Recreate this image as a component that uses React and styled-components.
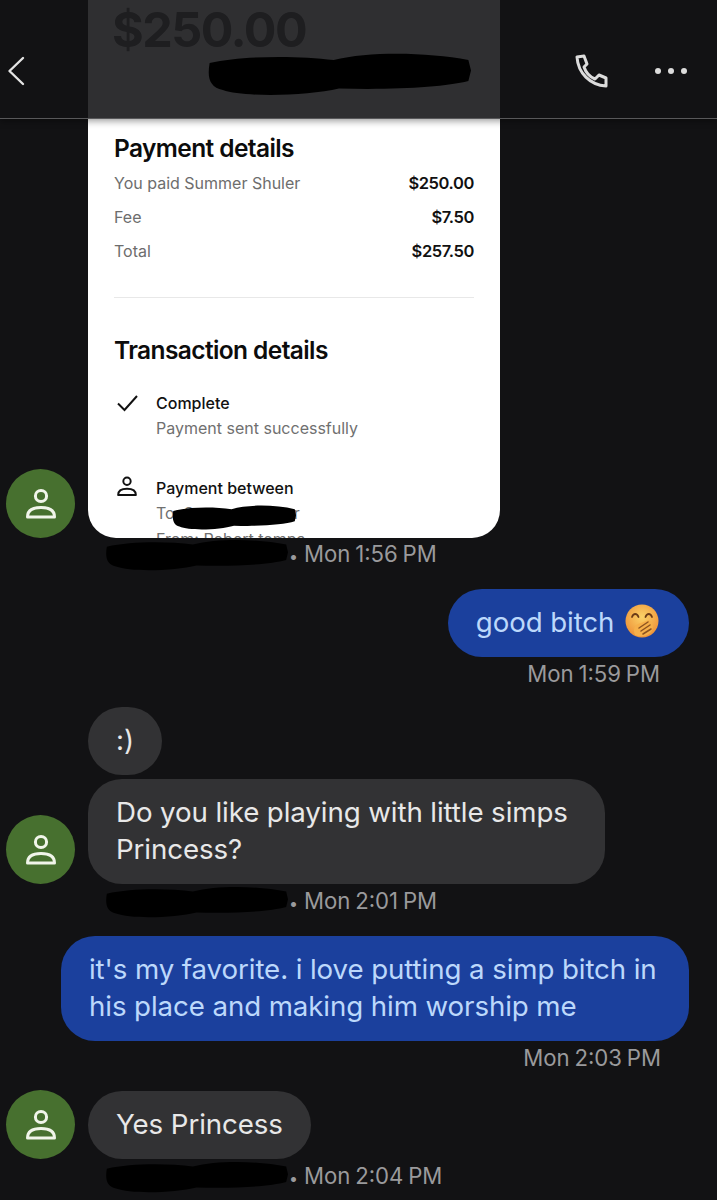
import styled, { createGlobalStyle } from 'styled-components'

const GlobalStyle = createGlobalStyle`
  html, body { margin: 0; padding: 0; background: #121214; }
  body { font-family: "Inter", "Liberation Sans", sans-serif; }
`

const Scrawl = ({ className }) => (
  <RedactSvg className={className} viewBox="0 0 100 30" preserveAspectRatio="none">
    <path d="M1 8 C14 3 34 3 48 6 C62 0 84 1 99 6 L100 13 L99 20 C90 24 72 26 50 25 C38 30 14 31 6 26 C1 24 0 18 1 8 Z" />
  </RedactSvg>
)

const PersonIcon = ({ size = 32, color = '#f1f5ea', stroke = 3 }) => (
  <svg width={size} height={size} viewBox="0 0 32 32" fill="none" stroke={color} strokeWidth={stroke}>
    <circle cx="16" cy="8" r="5.6" />
    <path d="M2.5 29 C2.5 23 7 19.5 16 19.5 C25 19.5 29.5 23 29.5 29 Z" strokeLinejoin="round" />
  </svg>
)

const Avatar = () => (
  <AvatarCircle>
    <PersonIcon />
  </AvatarCircle>
)

const PhoneIcon = () => (
  <svg width="34" height="34" viewBox="0 0 34 34" fill="none" stroke="#dcdcdc" strokeWidth="3" strokeLinejoin="round">
    <path d="M3 3 L10 2 L13 10 L10 13 C12 19 16 23 21 25 L25 21 L32 24 L32 32 C16 31 4 19 3 3 Z" />
  </svg>
)

const HandEmoji = () => (
  <EmojiSvg viewBox="0 0 34 34">
    <defs>
      <radialGradient id="face" cx="50%" cy="38%" r="62%">
        <stop offset="0%" stopColor="#fbd267" />
        <stop offset="100%" stopColor="#ee9238" />
      </radialGradient>
    </defs>
    <circle cx="17" cy="17" r="16.5" fill="url(#face)" />
    <path d="M7 13 C8.5 9 12 9 13.5 13 M20.5 13 C22 9 25.5 9 27 13" fill="none" stroke="#6b3a16" strokeWidth="1.8" strokeLinecap="round" />
    <path d="M10 31 C8 26 9 22 13 20 L24 16 C29 19 29 25 25 29 C21 33 14 33 10 31 Z" fill="#f6b04a" />
    <path d="M14 24 L23 18 M16 27 L25 21 M18 30 L26 25" fill="none" stroke="#8c5320" strokeWidth="1.5" strokeLinecap="round" />
  </EmojiSvg>
)

const App = () => {
  return (
    <Page>
      <GlobalStyle />
      <Header>
        <svg width="18" height="30" viewBox="0 0 18 30" fill="none" stroke="#e4e4e4" strokeWidth="2.4" strokeLinecap="round" strokeLinejoin="round">
          <path d="M16 2 L2.5 15 L16 28" />
        </svg>
        <HeaderActions>
          <PhoneIcon />
          <Dots>
            <i /><i /><i />
          </Dots>
        </HeaderActions>
        <HeaderScrawl />
      </Header>

      <Row>
        <Avatar />
        <ReceiptCard>
          <Amount>$250.00</Amount>
          <SectionTitle>Payment details</SectionTitle>
          <LineItem><span>You paid Summer Shuler</span><strong>$250.00</strong></LineItem>
          <LineItem><span>Fee</span><strong>$7.50</strong></LineItem>
          <LineItem><span>Total</span><strong>$257.50</strong></LineItem>
          <Divider />
          <SectionTitle $top={36}>Transaction details</SectionTitle>
          <DetailRow $top={24}>
            <svg width="24" height="24" viewBox="0 0 24 24" fill="none" stroke="#111" strokeWidth="2">
              <path d="M3 12.5 L9.5 19 L22 5" />
            </svg>
            <div>
              <DetailTitle>Complete</DetailTitle>
              <DetailText>Payment sent successfully</DetailText>
            </div>
          </DetailRow>
          <DetailRow $top={34}>
            <PersonIcon size={21} color="#111" />
            <div>
              <DetailTitle>Payment between</DetailTitle>
              <DetailText>To: Summer Shuler</DetailText>
              <DetailText>From: Robert tempa</DetailText>
            </div>
          </DetailRow>
          <ToScrawl />
        </ReceiptCard>
      </Row>
      <Meta>
        <Sender>(</Sender>
        <MetaScrawl />
        <Dot>•</Dot>Mon 1:56 PM
      </Meta>

      <SentRow>
        <Bubble $sent>good bitch <HandEmoji /></Bubble>
      </SentRow>
      <SentMeta $right={57}>Mon 1:59 PM</SentMeta>

      <Row $top={19}>
        <AvatarGap />
        <Bubble>:)</Bubble>
      </Row>
      <Row $top={4}>
        <Avatar />
        <Bubble $wide>Do you like playing with little simps Princess?</Bubble>
      </Row>
      <Meta $top={1}>
        <Sender>(</Sender>
        <MetaScrawl />
        <Dot>•</Dot>Mon 2:01 PM
      </Meta>

      <SentRow>
        <Bubble $sent $wide>it's my favorite. i love putting a simp bitch in his place and making him worship me</Bubble>
      </SentRow>
      <SentMeta $right={56}>Mon 2:03 PM</SentMeta>

      <Row $top={18}>
        <Avatar />
        <Bubble>Yes Princess</Bubble>
      </Row>
      <Meta $top={1}>
        <Sender>(</Sender>
        <MetaScrawl />
        <Dot>•</Dot>Mon 2:04 PM
      </Meta>
    </Page>
  )
}

const Page = styled.div`
  position: relative;
  width: 717px;
  height: 1200px;
  overflow: hidden;
  background: #121214;
  display: flex;
  flex-direction: column;
`

const Header = styled.header`
  position: absolute;
  top: 0;
  left: 0;
  right: 0;
  height: 119px;
  box-sizing: border-box;
  padding: 24px 30px 0 7px;
  display: flex;
  align-items: center;
  justify-content: space-between;
  background: rgba(18, 18, 20, 0.88);
  border-bottom: 1.5px solid #58585a;
  box-shadow: 0 2px 7px rgba(0, 0, 0, 0.4);
  z-index: 2;
`

const HeaderActions = styled.div`
  display: flex;
  align-items: center;
  gap: 47px;
  margin-top: -1px;
`

const Dots = styled.div`
  display: flex;
  gap: 7px;
  i {
    width: 6px;
    height: 6px;
    border-radius: 50%;
    background: #dcdcdc;
  }
`

const RedactSvg = styled.svg`
  position: absolute;
  fill: #000;
`

const HeaderScrawl = styled(Scrawl)`
  left: 207px;
  top: 51px;
  width: 264px;
  height: 45px;
`

const ToScrawl = styled(Scrawl)`
  left: 84px;
  top: 504px;
  width: 124px;
  height: 26px;
`

const MetaScrawl = styled(Scrawl)`
  left: 105px;
  top: 0;
  width: 183px;
  height: 33px;
`

const Row = styled.div`
  display: flex;
  align-items: flex-end;
  gap: 13px;
  padding-left: 6px;
  margin-top: ${(p) => p.$top || 0}px;
`

const AvatarCircle = styled.div`
  width: 69px;
  height: 69px;
  flex: none;
  border-radius: 50%;
  background: #47702f;
  display: flex;
  align-items: center;
  justify-content: center;
`

const AvatarGap = styled.div`
  width: 69px;
  flex: none;
`

const ReceiptCard = styled.div`
  position: relative;
  width: 412px;
  height: 538px;
  box-sizing: border-box;
  padding: 0 26px;
  overflow: hidden;
  background: #fff;
  border-radius: 0 0 28px 28px;
  color: #111;
`

const Amount = styled.div`
  height: 60px;
  line-height: 60px;
  margin-left: -2px;
  font-size: 48.5px;
  font-weight: 700;
  letter-spacing: -1.5px;
  color: #707072;
`

const SectionTitle = styled.h3`
  margin: ${(p) => p.$top ?? 72}px 0 0;
  font-size: 24.5px;
  line-height: 32px;
  font-weight: 600;
  letter-spacing: -0.6px;
  color: #0c0c0c;
`

const LineItem = styled.div`
  display: flex;
  justify-content: space-between;
  height: 34px;
  line-height: 34px;
  font-size: 16px;
  color: #6d6d6d;
  h3 + & { margin-top: 2px; }
  strong {
    font-weight: 600;
    font-size: 16.5px;
    color: #111;
    letter-spacing: -0.4px;
  }
`

const Divider = styled.div`
  height: 1px;
  margin-top: 29px;
  background: #e8e8e8;
`

const DetailRow = styled.div`
  display: flex;
  gap: 17px;
  margin-top: ${(p) => p.$top}px;
  svg { flex: none; width: 24px; margin-left: 1px; margin-top: 1px; }
`

const DetailTitle = styled.div`
  font-size: 16px;
  line-height: 26px;
  font-weight: 500;
  color: #111;
`

const DetailText = styled.div`
  font-size: 16px;
  line-height: 25px;
  color: #707070;
  & + & { margin-top: 1px; }
`

const Bubble = styled.div`
  box-sizing: border-box;
  max-width: 628px;
  min-height: 68px;
  padding: 15px 28px 16px;
  border-radius: 34px;
  font-size: 27.7px;
  line-height: 37px;
  letter-spacing: -0.1px;
  background: ${(p) => (p.$sent ? '#1b409d' : '#323234')};
  color: ${(p) => (p.$sent ? '#bcd8fb' : '#e8e8e8')};
  width: ${(p) => (p.$wide ? (p.$sent ? '628px' : '517px') : 'auto')};
`

const EmojiSvg = styled.svg`
  display: inline-block;
  width: 34px;
  height: 34px;
  margin: 0 2px 0 3px;
  vertical-align: -6px;
`

const SentRow = styled.div`
  display: flex;
  justify-content: flex-end;
  padding-right: 28px;
  margin-top: 21px;
`

const metaFont = `
  font-size: 22.2px;
  line-height: 32px;
  word-spacing: -1.5px;
  color: #9a9a9c;
`

const Meta = styled.div`
  position: relative;
  height: 30px;
  margin-top: ${(p) => p.$top || 0}px;
  padding-left: 289px;
  white-space: nowrap;
  ${metaFont}
`

const Sender = styled.span`
  position: absolute;
  left: 116px;
  font-size: 20px;
`

const Dot = styled.span`
  margin-right: 6px;
  font-size: 16px;
`

const SentMeta = styled.div`
  height: 30px;
  margin-top: 1px;
  text-align: right;
  padding-right: ${(p) => p.$right}px;
  ${metaFont}
`

export default App
